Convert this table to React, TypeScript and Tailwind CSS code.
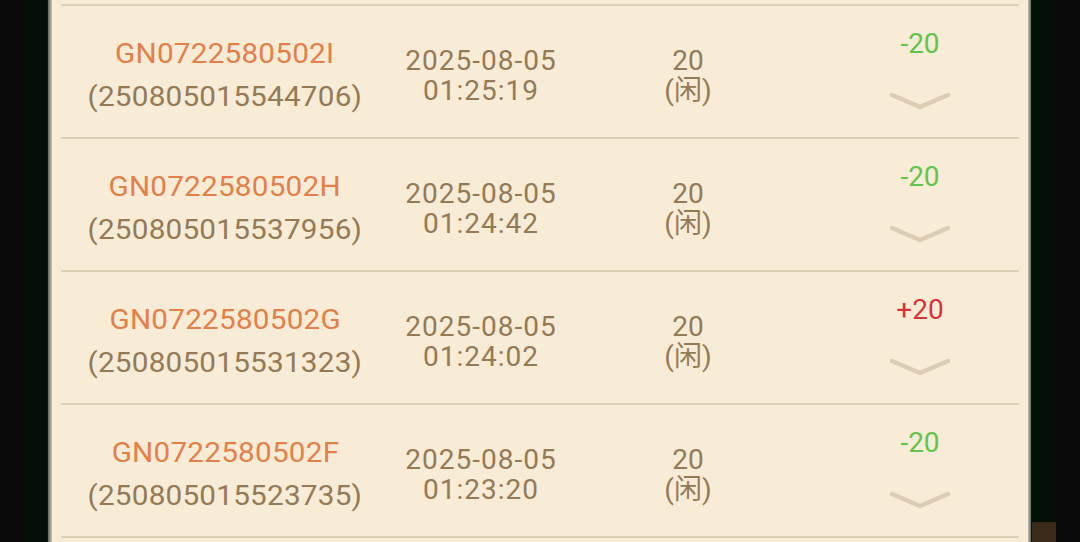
import React from "react";

type Row = { gn: string; id: string; date: string; time: string; amt: string; win: boolean };

const rows: Row[] = [
  { gn: "GN0722580502I", id: "(250805015544706)", date: "2025-08-05", time: "01:25:19", amt: "-20", win: false },
  { gn: "GN0722580502H", id: "(250805015537956)", date: "2025-08-05", time: "01:24:42", amt: "-20", win: false },
  { gn: "GN0722580502G", id: "(250805015531323)", date: "2025-08-05", time: "01:24:02", amt: "+20", win: true },
  { gn: "GN0722580502F", id: "(250805015523735)", date: "2025-08-05", time: "01:23:20", amt: "-20", win: false },
];

function Chevron() {
  return (
    <svg width="60" height="18" viewBox="0 0 60 18" className="block">
      <polyline
        points="2,3 30,15 58,3"
        fill="none"
        stroke="#d8c7ae"
        strokeWidth="4.5"
        strokeLinecap="round"
        strokeLinejoin="round"
        opacity="0.85"
      />
    </svg>
  );
}

export default function App() {
  return (
    <div
      className="flex h-[542px] w-[1080px] overflow-hidden bg-[#0a0a0a]"
      style={{ fontFamily: "Roboto, 'Noto Sans CJK SC', sans-serif" }}
    >
      <div className="w-[23px] bg-[#0a0a0a]" />
      <div className="w-[25px] bg-[#021007] border-r border-[#0c1a10]" />
      <div className="w-[4px] bg-gradient-to-r from-[#5f6660] to-[#c9c6bb]" />
      <div className="flex-1 bg-[#f8ecd7] px-[9px] pt-[4px]">
        <div className="h-[2px] bg-[#e0d0b6]" />
        {rows.map((r, i) => (
          <div
            key={i}
            className="grid h-[133px] grid-cols-[328px_184px_230px_216px] border-b-2 border-[#e0d0b6]"
          >
            <div className="flex flex-col items-center justify-center pt-[9px] text-[27px] leading-[43px] tracking-[0.2px]">
              <div className="inline-block scale-x-[1.1] text-[#e47f49]">{r.gn}</div>
              <div className="inline-block scale-x-[1.1] text-[#957a56]">{r.id}</div>
            </div>
            <div className="flex flex-col items-center justify-center pt-[8px] text-[28px] leading-[30px] tracking-[1px] text-[#957a56]">
              <div>{r.date}</div>
              <div>{r.time}</div>
            </div>
            <div className="flex flex-col items-center justify-center pt-[8px] text-[28px] leading-[30px] text-[#957a56]">
              <div>20</div>
              <div>(闲)</div>
            </div>
            <div className="flex flex-col items-center pl-[18px] pt-[23px]">
              <div
                className={
                  "text-[28px] leading-[29px] " + (r.win ? "text-[#d9323b]" : "text-[#62c44a]")
                }
              >
                {r.amt}
              </div>
              <div className="mt-[34px]">
                <Chevron />
              </div>
            </div>
          </div>
        ))}
      </div>
      <div className="w-[3px] bg-gradient-to-r from-[#c9c6bb] to-[#5f6660]" />
      <div className="flex w-[25px] flex-col bg-[#021007] border-l border-[#0c1a10]">
        <div className="flex-1" />
        <div className="h-[20px] bg-[#3a2a18]" />
      </div>
      <div className="w-[24px] bg-[#0a0a0a]" />
    </div>
  );
}
